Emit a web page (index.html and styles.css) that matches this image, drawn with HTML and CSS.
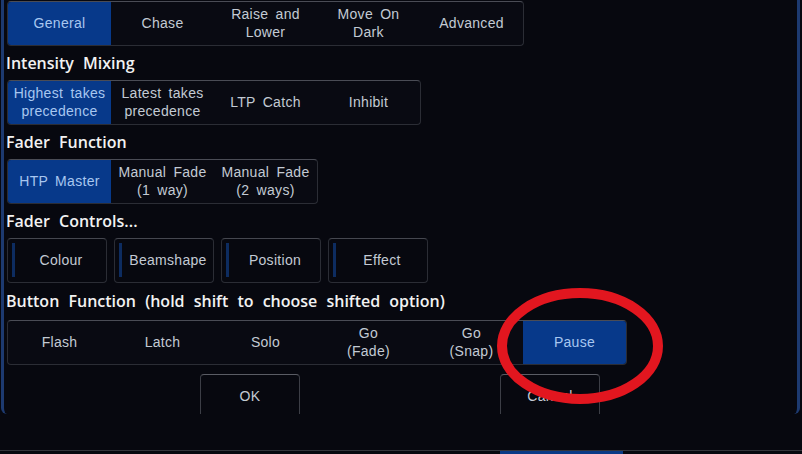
FILE: index.html
```html
<!DOCTYPE html>
<html lang="en">
<head>
  <meta charset="UTF-8">
  <title>Playback Options</title>
  <link rel="stylesheet" href="styles.css">
</head>
<body>
  <div class="screen">
    <div class="dialog">
      <div class="group">
        <div class="btn selected">General</div>
        <div class="btn">Chase</div>
        <div class="btn">Raise and<br>Lower</div>
        <div class="btn">Move On<br>Dark</div>
        <div class="btn">Advanced</div>
      </div>

      <h2 class="heading">Intensity Mixing</h2>
      <div class="group">
        <div class="btn selected">Highest takes<br>precedence</div>
        <div class="btn">Latest takes<br>precedence</div>
        <div class="btn">LTP Catch</div>
        <div class="btn">Inhibit</div>
      </div>

      <h2 class="heading">Fader Function</h2>
      <div class="group">
        <div class="btn selected">HTP Master</div>
        <div class="btn">Manual Fade<br>(1 way)</div>
        <div class="btn">Manual Fade<br>(2 ways)</div>
      </div>

      <h2 class="heading">Fader Controls...</h2>
      <div class="controls">
        <div class="ctrl">Colour</div>
        <div class="ctrl">Beamshape</div>
        <div class="ctrl">Position</div>
        <div class="ctrl">Effect</div>
      </div>

      <h2 class="heading heading-wide">Button Function (hold shift to choose shifted option)</h2>
      <div class="group">
        <div class="btn">Flash</div>
        <div class="btn">Latch</div>
        <div class="btn">Solo</div>
        <div class="btn">Go<br>(Fade)</div>
        <div class="btn">Go<br>(Snap)</div>
        <div class="btn selected">Pause</div>
      </div>

      <div class="footer">
        <div class="action">OK</div>
        <div class="action">Cancel</div>
      </div>
    </div>

    <div class="taskbar">
      <div class="task-active"></div>
    </div>

    <!-- red marker drawn over the screenshot -->
    <svg class="marker" width="802" height="454" viewBox="0 0 802 454">
      <ellipse cx="580" cy="346" rx="78" ry="53" fill="none" stroke="#e2161f" stroke-width="10"/>
    </svg>
  </div>
</body>
</html>
```

FILE: styles.css
```css
body {
  margin: 0;
  background-color: #07080f;
  font-family: "Liberation Sans", Arial, sans-serif;
  overflow: hidden;
}

.screen {
  position: relative;
  width: 802px;
  height: 454px;
}

.dialog {
  height: 414px;
  margin: 0 2px 0 1px;
  padding: 1px 0 0 3px;
  box-sizing: border-box;
  border-left: 3px solid #1d3a70;
  border-right: 3px solid #1d3a70;
  border-radius: 0 0 6px 6px;
  overflow: hidden;
}

.heading {
  margin: 0 0 0 -1px;
  height: 34px;
  line-height: 35px;
  font-family: "Open Sans", sans-serif;
  font-size: 16px;
  font-weight: 600;
  word-spacing: 5px;
  color: #f2f2f2;
}

.heading-wide {
  height: 37px;
  line-height: 37px;
}

.group {
  display: inline-flex;
  height: 45px;
  border: 1px solid #2b2d35;
  border-top-color: #4a4c55;
  border-radius: 4px;
  background-color: #090a12;
  overflow: hidden;
  box-sizing: border-box;
}

.btn {
  width: 103px;
  padding-bottom: 2px;
  box-sizing: border-box;
  display: flex;
  align-items: center;
  justify-content: center;
  text-align: center;
  font-size: 14px;
  line-height: 18px;
  letter-spacing: 0.3px;
  word-spacing: 3px;
  color: #c3cad4;
}

.btn.selected {
  background-color: #07398a;
  color: #a8c7f0;
}

.controls {
  display: flex;
  gap: 7px;
}

.ctrl {
  position: relative;
  width: 100px;
  height: 45px;
  box-sizing: border-box;
  border: 1px solid #2b2d35;
  border-top-color: #45474f;
  border-radius: 4px;
  display: flex;
  align-items: center;
  justify-content: center;
  padding: 0 0 2px 8px;
  font-size: 14px;
  letter-spacing: 0.3px;
  color: #c3cad4;
}

.ctrl::before {
  content: "";
  position: absolute;
  left: 4px;
  top: 4px;
  bottom: 5px;
  width: 3px;
  background-color: #0d2c60;
}

.footer {
  display: flex;
  gap: 200px;
  margin-top: 9px;
  padding-left: 193px;
}

.action {
  width: 100px;
  height: 50px;
  box-sizing: border-box;
  border: 1px solid #3c3e46;
  border-top-color: #5a5c64;
  border-radius: 4px;
  padding-top: 13px;
  text-align: center;
  font-size: 14px;
  letter-spacing: 0.3px;
  color: #c3cad4;
}

.taskbar {
  margin-top: 36px;
  height: 4px;
  border-top: 1px solid #34353b;
  padding-left: 500px;
}

.task-active {
  width: 123px;
  height: 4px;
  background-color: #0b3a86;
}

.marker {
  position: absolute;
  left: 0;
  top: 0;
}
```
